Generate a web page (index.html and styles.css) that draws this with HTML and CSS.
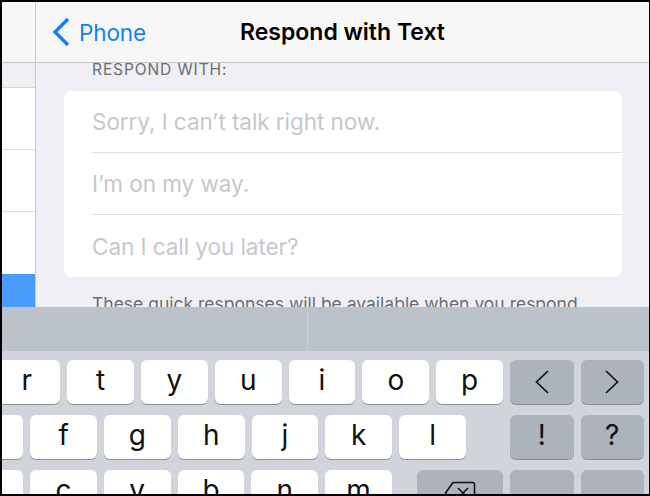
FILE: index.html
```html
<!DOCTYPE html>
<html lang="en">
<head>
<meta charset="utf-8">
<title>Respond with Text</title>
<link rel="stylesheet" href="styles.css">
</head>
<body>
<div class="screen">
  <div class="top">
    <aside class="sidebar">
      <div class="sb-nav"></div>
      <div class="sb-gap"></div>
      <div class="sb-row"></div>
      <div class="sb-row"></div>
      <div class="sb-row sb-last"></div>
      <div class="sb-selected"></div>
    </aside>
    <main class="main">
      <header class="nav">
        <a class="back" href="#">
          <svg class="chev" width="18" height="30" viewBox="0 0 18 30"><path d="M16 2 L3 15 L16 28" fill="none" stroke="#157efb" stroke-width="3.4" stroke-linecap="butt" stroke-linejoin="miter"/></svg>
          <span>Phone</span>
        </a>
        <h1 class="title">Respond with Text</h1>
        <span class="nav-spacer"></span>
      </header>
      <div class="section-head">RESPOND WITH:</div>
      <div class="card">
        <div class="row"><span class="placeholder">Sorry, I can’t talk right now.</span></div>
        <div class="row"><span class="placeholder">I’m on my way.</span></div>
        <div class="row"><span class="placeholder">Can I call you later?</span></div>
      </div>
      <p class="footnote">These quick responses will be available when you respond to an incoming call with a text.</p>
    </main>
  </div>
  <div class="keyboard">
    <div class="suggest">
      <div class="sg-cell"></div>
      <div class="sg-cell sg-right"></div>
    </div>
    <div class="keys">
      <div class="krow">
        <span class="key">q</span><span class="key">w</span><span class="key">e</span><span class="key">r</span><span class="key">t</span><span class="key">y</span><span class="key">u</span><span class="key">i</span><span class="key">o</span><span class="key">p</span>
        <span class="key fn arrow"><svg width="16" height="26" viewBox="0 0 16 26"><path d="M14 2 L2.5 13 L14 24" fill="none" stroke="#111" stroke-width="1.7"/></svg></span>
        <span class="key fn arrow"><svg width="16" height="26" viewBox="0 0 16 26"><path d="M2 2 L13.5 13 L2 24" fill="none" stroke="#111" stroke-width="1.7"/></svg></span>
      </div>
      <div class="krow">
        <span class="key">a</span><span class="key">s</span><span class="key">d</span><span class="key">f</span><span class="key">g</span><span class="key">h</span><span class="key">j</span><span class="key">k</span><span class="key">l</span>
        <span class="key fn first-fn">!</span><span class="key fn">?</span>
      </div>
      <div class="krow">
        <span class="key">z</span><span class="key">x</span><span class="key">c</span><span class="key">v</span><span class="key">b</span><span class="key">n</span><span class="key">m</span>
        <span class="key fn del">
          <svg width="32" height="24" viewBox="0 0 32 24"><path d="M9 1.5 H28.5 a2 2 0 0 1 2 2 V20.5 a2 2 0 0 1 -2 2 H9 L1.5 12 Z" fill="none" stroke="#111" stroke-width="1.6" stroke-linejoin="round"/><path d="M14 7 L24 17 M24 7 L14 17" stroke="#111" stroke-width="1.6"/></svg>
        </span>
        <span class="key fn">,</span><span class="key fn">.</span>
      </div>
    </div>
  </div>
</div>
</body>
</html>
```

FILE: styles.css
```css
* { box-sizing: border-box; }

html, body {
  margin: 0;
  padding: 0;
  background: #000;
}

body {
  width: 650px;
  height: 496px;
  overflow: hidden;
  font-family: "Inter", "Liberation Sans", sans-serif;
}

.screen {
  margin: 2px 1px 2px 2px;
  width: 647px;
  height: 492px;
  overflow: hidden;
  display: flex;
  flex-direction: column;
  background: #efeff4;
}

.top {
  height: 305px;
  display: flex;
  flex-shrink: 0;
  overflow: hidden;
}

/* sidebar */
.sidebar {
  width: 34px;
  flex-shrink: 0;
  border-right: 1px solid #c8c7cc;
  display: flex;
  flex-direction: column;
  background: #fff;
}
.sb-nav {
  height: 61px;
  background: #f7f7f8;
  border-bottom: 1px solid #c6c6c9;
  flex-shrink: 0;
}
.sb-gap {
  height: 25px;
  background: #efeff4;
  border-bottom: 1px solid #d6d6da;
  flex-shrink: 0;
}
.sb-row {
  height: 62px;
  border-bottom: 1px solid #dcdce0;
  flex-shrink: 0;
}
.sb-last {
  height: 62px;
  border-bottom: 0;
}
.sb-selected {
  flex: 1;
  background: #4a9dff;
}

/* main */
.main {
  flex: 1;
  min-width: 0;
  overflow: hidden;
  display: flex;
  flex-direction: column;
  background: #efeff4;
}
.main > * { flex-shrink: 0; }

.nav {
  height: 61px;
  background: #f7f7f8;
  border-bottom: 1px solid #c6c6c9;
  display: grid;
  grid-template-columns: 1fr auto 1fr;
  align-items: center;
}
.back {
  display: flex;
  align-items: center;
  gap: 9px;
  padding-left: 16px;
  color: #157efb;
  text-decoration: none;
  font-size: 22.5px;
  letter-spacing: -0.1px;
}
.chev { display: block; }
.title {
  margin: 0;
  font-size: 23px;
  font-weight: 600;
  color: #000;
  letter-spacing: 0;
}

.section-head {
  padding: 0 0 0 56px;
  height: 28px;
  font-size: 15.5px;
  line-height: 13px;
  color: #6d6d72;
  letter-spacing: 0.9px;
  white-space: nowrap;
}

.card {
  margin: 0 27px 0 28px;
  background: #fff;
  border-radius: 7px;
  padding-left: 28px;
}
.row {
  height: 62px;
  display: flex;
  align-items: center;
  border-bottom: 1px solid #e0e0e3;
}
.row:last-child { border-bottom: 0; }
.placeholder {
  font-size: 22.6px;
  color: #c7c7cd;
  letter-spacing: -0.1px;
  white-space: nowrap;
}

.footnote {
  margin: 16px 64px 0 56px;
  font-size: 17.5px;
  line-height: 21px;
  color: #6d6d72;
}

/* keyboard */
.keyboard {
  flex: 1;
  display: flex;
  flex-direction: column;
  background: #d1d5db;
}
.suggest {
  height: 44px;
  flex-shrink: 0;
  background: #bcc2c9;
  display: flex;
}
.sg-cell {
  width: 306px;
  border-right: 1px solid #cbd0d6;
}
.sg-right {
  flex: 1;
  border-right: 0;
}

.keys {
  padding: 9px 5px 0 0;
  display: flex;
  flex-direction: column;
  gap: 11px;
}
.krow {
  display: flex;
  justify-content: flex-end;
  gap: 7px;
}
.key {
  flex-shrink: 0;
  width: 66.8px;
  height: 44px;
  background: #fff;
  border-radius: 6px;
  box-shadow: 0 1px 0 #8a8e93;
  display: flex;
  align-items: center;
  justify-content: center;
  font-size: 28px;
  color: #111;
  padding-bottom: 4px;
}
.fn {
  width: 63.5px;
  background: #acb3bc;
}
.arrow {
  padding-bottom: 0;
}
.arrow svg { display: block; }
.first-fn { margin-left: 37px; }
.del {
  width: 86px;
  margin-left: 18px;
  align-items: flex-start;
  padding: 11px 0 0 0;
}
.del svg { display: block; }
```
